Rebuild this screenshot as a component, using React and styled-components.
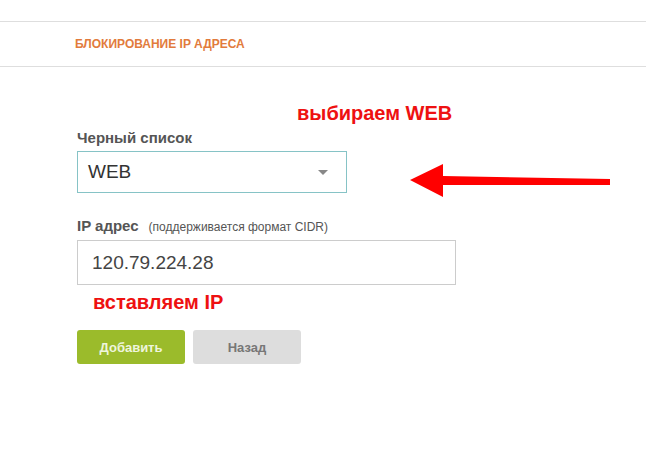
import React from "react";
import styled, { createGlobalStyle } from "styled-components";

const GlobalStyle = createGlobalStyle`
  body {
    margin: 0;
    background: #ffffff;
    font-family: "Liberation Sans", Arial, sans-serif;
  }
`;

const Page = styled.div`
  position: relative;
  width: 646px;
  height: 474px;
  padding-top: 21px;
  box-sizing: border-box;
`;

const Header = styled.div`
  border-top: 1px solid #dedede;
  border-bottom: 1px solid #dedede;
  height: 44px;
  display: flex;
  align-items: center;
  padding-left: 75px;
`;

const Title = styled.h2`
  margin: 0;
  font-size: 12px;
  font-weight: bold;
  color: #e27b3c;
  text-transform: uppercase;
`;

const Form = styled.div`
  display: flex;
  flex-direction: column;
  padding-left: 77px;
  padding-top: 35px;
`;

const Note = styled.div`
  color: #ee1111;
  font-size: 20px;
  font-weight: bold;
  margin-left: ${(p) => p.$indent || 0}px;
  margin-top: ${(p) => p.$top || 0}px;
  line-height: 22px;
`;

const Field = styled.div`
  display: flex;
  flex-direction: column;
  margin-top: ${(p) => p.$top || 0}px;
`;

const Label = styled.label`
  font-size: 15px;
  font-weight: bold;
  color: #555555;
  line-height: 16px;
  margin-bottom: 5px;
`;

const Hint = styled.span`
  font-size: 12px;
  font-weight: normal;
  color: #555555;
  margin-left: 10px;
`;

const SelectBox = styled.div`
  width: 270px;
  height: 42px;
  box-sizing: border-box;
  border: 1px solid #86c3c6;
  display: flex;
  align-items: center;
  justify-content: space-between;
  padding: 0 18px 0 10px;
  font-size: 19px;
  color: #333333;
`;

const Caret = styled.span`
  width: 0;
  height: 0;
  border-left: 5px solid transparent;
  border-right: 5px solid transparent;
  border-top: 5px solid #888888;
`;

const TextInput = styled.div`
  width: 379px;
  height: 45px;
  box-sizing: border-box;
  border: 1px solid #cccccc;
  display: flex;
  align-items: center;
  padding-left: 14px;
  font-size: 19px;
  color: #444444;
`;

const Buttons = styled.div`
  display: flex;
  gap: 8px;
  margin-top: 17px;
`;

const Button = styled.button`
  width: 108px;
  height: 34px;
  border: none;
  border-radius: 3px;
  font-family: "Liberation Sans", Arial, sans-serif;
  font-size: 13px;
  font-weight: bold;
  background: ${(p) => (p.$primary ? "#9bbb2b" : "#dddddd")};
  color: ${(p) => (p.$primary ? "#eef5dc" : "#777777")};
  cursor: pointer;
`;

const Arrow = styled.svg`
  position: absolute;
  left: 408px;
  top: 162px;
`;

export default function App() {
  return (
    <Page>
      <GlobalStyle />
      <Header>
        <Title>Блокирование IP адреса</Title>
      </Header>
      <Form>
        <Note $indent={220}>выбираем WEB</Note>
        <Field $top={6}>
          <Label>Черный список</Label>
          <SelectBox>
            WEB
            <Caret />
          </SelectBox>
        </Field>
        <Field $top={25}>
          <Label>
            IP адрес<Hint>(поддерживается формат CIDR)</Hint>
          </Label>
          <TextInput>120.79.224.28</TextInput>
        </Field>
        <Note $indent={16} $top={6}>вставляем IP</Note>
        <Buttons>
          <Button $primary>Добавить</Button>
          <Button>Назад</Button>
        </Buttons>
      </Form>
      <Arrow width="206" height="38" viewBox="0 0 206 38">
        <polygon points="2,18 35,2 35,14 202,17 202,23 35,23 35,35" fill="#ff0000" />
      </Arrow>
    </Page>
  );
}
